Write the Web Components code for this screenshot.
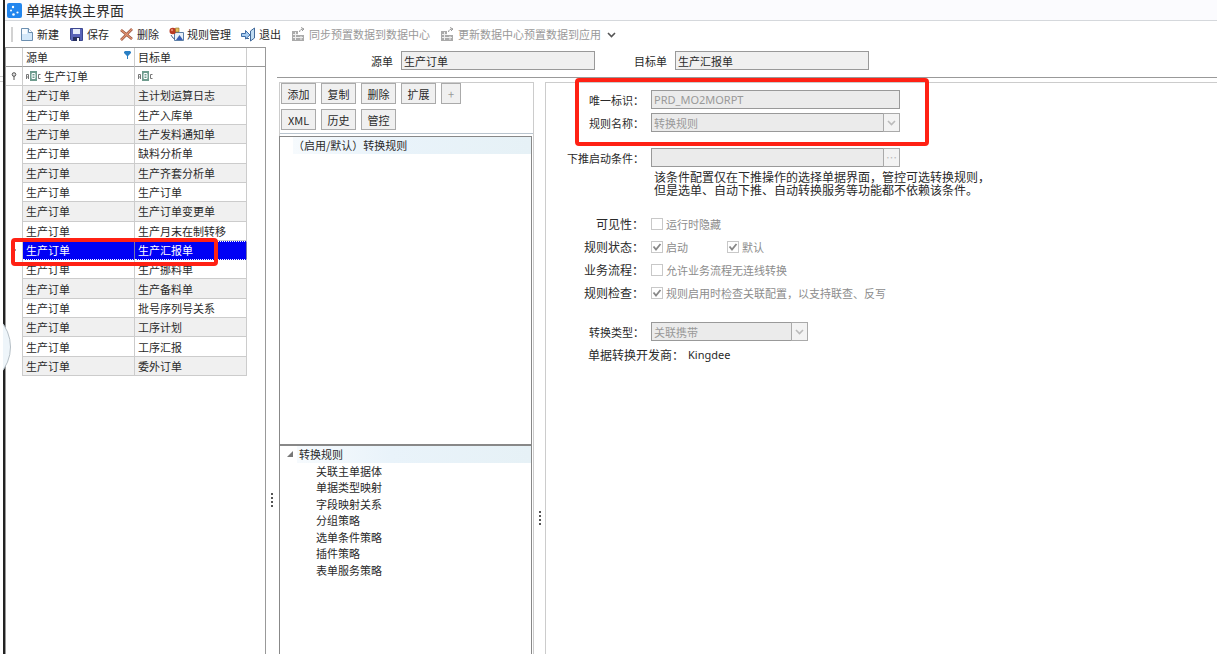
<!DOCTYPE html>
<html lang="zh-CN">
<head>
<meta charset="utf-8">
<title>单据转换主界面</title>
<style>
    html, body {
        height: 100%;
        margin: 0;
        overflow: hidden;
        background: #fff;
        color: #2a2a2a;
        font: 11px/16px "Noto Sans CJK SC", "Noto Sans", sans-serif;
    }
</style>
</head>
<body>
<app-window heading="单据转换主界面">
    <tool-bar slot="toolbar">
        <tool-item icon="new">新建</tool-item>
        <tool-item icon="save">保存</tool-item>
        <tool-item icon="remove">删除</tool-item>
        <tool-item icon="rules">规则管理</tool-item>
        <tool-item icon="exit">退出</tool-item>
        <tool-item icon="sync" disabled>同步预置数据到数据中心</tool-item>
        <tool-item icon="sync" disabled>更新数据中心预置数据到应用</tool-item>
    </tool-bar>
    <bill-grid slot="side"></bill-grid>
    <split-bar slot="side" offset="446"></split-bar>
    <bill-header slot="head"></bill-header>
    <rule-panel slot="body"></rule-panel>
    <split-bar slot="body" offset="429"></split-bar>
    <rule-form slot="body"></rule-form>
</app-window>

<script>
const ICONS = {
    logo: '<rect width="15" height="15" rx="2" fill="#2386ee"/><g fill="#fff"><circle cx="6" cy="4" r="1.200"/><circle cx="4" cy="7.500" r="1"/><circle cx="6.500" cy="11.500" r="1.300"/><circle cx="10.500" cy="9.500" r="1.100"/></g>',
    new: '<path d="M2.500 1.500h7l4 4v8h-11z" fill="#d3e8fa" stroke="#6c8fb0"/><path d="M3 2h5v5H3z" fill="#f7fbff"/><path d="M9.500 1.500v4h4" fill="#fff" stroke="#6c8fb0"/>',
    save: '<path d="M1.500 1.500h12v12h-11l-1-1z" fill="#5964b8" stroke="#3d4890"/><path d="M4 2h7v5H4z" fill="#e6ecfa"/><path d="M4 10h7v4H4z" fill="#27305f"/><path d="M8 11h2v3H8z" fill="#fff"/>',
    remove: '<path d="M2 3l11 9M13 2L2 13" fill="none" stroke="#93503c" stroke-width="2.600"/><path d="M2 3l11 9M13 2L2 13" fill="none" stroke="#e39472" stroke-width="1.200"/>',
    rules: '<path d="M5.500 5.500h9v8h-9z" fill="#e8f0f8" stroke="#5c7fa8"/><path d="M7 13l3.500-5 3.500 5z" fill="#3a5fb5"/><circle cx="3.800" cy="4" r="3.300" fill="#b93a22"/><circle cx="3" cy="3" r="1.200" fill="#e58a70"/><path d="M6.500 1h3.500v4H6.500z" fill="#eac15a" stroke="#8a6b28" stroke-width=".6"/><path d="M2 8l2 3 2 1" fill="none" stroke="#48628a"/>',
    exit: '<path d="M9.500 4l4-3v10l-4 3z" fill="#c0dcf2" stroke="#41699a"/><path d="M4 11.500h4" fill="none" stroke="#41699a"/><path d="M.5 6.500h4V3.500L9 8l-4.500 4V9.500h-4z" fill="#a9cdf0" stroke="#3f6ea8"/>',
    sync: '<path d="M1 4h6v10H1zM7 8h6v6H7z" fill="#aaa"/><path d="M2 7.500h5M2 10.500h10M4.500 5v8M10 9v4" stroke="#eee"/><path d="M8.500 5c0-2 2-3 4-3M10 .5l3 1.500-2 2" fill="none" stroke="#999"/>'
};

const icon = name => `<svg class="icon" width="15" height="15" viewBox="0 0 15 15" aria-hidden="true">${ICONS[name]}</svg>`;
const arrow = '<svg width="9" height="9" viewBox="0 0 9 9" aria-hidden="true"><path d="M1 3l3.500 3.500L8 3" fill="none" stroke="currentColor" stroke-width="1.600"/></svg>';

// Shared look of the read-only boxes
const FIELD_CSS = `
    input, select {
        appearance: none;
        box-sizing: border-box;
        height: 19px;
        margin: 0;
        padding: 0 2px;
        border: 1px solid #999;
        border-radius: 0;
        background: #f0f0f0;
        color: #2a2a2a;
        font: inherit;
        opacity: 1;
    }
    input:disabled, select:disabled {
        background: #ebebeb;
        color: #999;
    }
`;

class AppWindow extends HTMLElement {
    constructor() {
        super();
        this.attachShadow({ mode: 'open' });
    }

    connectedCallback() {
        this.shadowRoot.innerHTML = `
        <style>
            :host { display: flex; height: 100vh; position: relative; }
            .gutter { width: 3px; flex: none; }
            .gutter i { display: block; margin-top: 76px; height: 4px; border: solid #ccc; border-width: 1px 0; }
            .window { flex: 1; min-width: 0; display: flex; flex-direction: column; border-left: 2px solid #222; }
            header { display: flex; align-items: center; gap: 4px; height: 20px; padding-left: 2px; background: #fbfbfe; border-bottom: 1px solid #d5d8dc; }
            h1 { margin: 0; font-size: 14px; line-height: 20px; font-weight: 400; }
            .content { flex: 1; min-height: 0; display: flex; }
            .main { flex: 1; min-width: 0; display: flex; flex-direction: column; }
            .body { flex: 1; min-height: 0; display: flex; margin-top: 4px; padding-left: 2px; }
            .knob { position: absolute; left: 3px; top: 322px; }
        </style>
        <div class="gutter"><i></i></div>
        <div class="window">
            <header>${icon('logo')}<h1>${this.getAttribute('heading')}</h1></header>
            <slot name="toolbar"></slot>
            <div class="content">
                <slot name="side"></slot>
                <div class="main">
                    <slot name="head"></slot>
                    <div class="body"><slot name="body"></slot></div>
                </div>
            </div>
        </div>
        <svg class="knob" width="9" height="50" viewBox="0 0 9 50" aria-hidden="true">
            <circle cx="-32" cy="25" r="39.500" fill="#eef5fa" stroke="#b5bfc6"/>
        </svg>`;
    }
}

class ToolBar extends HTMLElement {
    constructor() {
        super();
        this.attachShadow({ mode: 'open' });
        this.shadowRoot.innerHTML = `
        <style>
            :host { display: flex; align-items: center; gap: 10px; height: 26px; padding-left: 6px; }
            .grip { width: 2px; height: 15px; margin-right: -4px; background: #d2d2d2; }
            button { margin: 0 0 0 -4px; padding: 0; border: 0; background: none; color: #555; line-height: 0; }
        </style>
        <span class="grip"></span>
        <slot></slot>
        <button type="button" aria-label="更多">${arrow}</button>`;
    }
}

class ToolItem extends HTMLElement {
    constructor() {
        super();
        this.attachShadow({ mode: 'open' });
    }

    connectedCallback() {
        this.shadowRoot.innerHTML = `
        <style>
            :host { display: block; }
            button { display: flex; align-items: center; gap: 3px; padding: 0; border: 0; background: none; color: #2a2a2a; font: inherit; white-space: nowrap; }
            button:disabled { color: #999; }
        </style>
        <button type="button" ${this.hasAttribute('disabled') ? 'disabled' : ''}>${icon(this.getAttribute('icon'))}<slot></slot></button>`;
    }
}

class SplitBar extends HTMLElement {
    constructor() {
        super();
        this.attachShadow({ mode: 'open' });
    }

    connectedCallback() {
        this.shadowRoot.innerHTML = `
        <style>
            :host { display: flex; flex: none; flex-direction: column; align-items: center; width: 11px; }
            svg { margin-top: ${this.getAttribute('offset')}px; }
        </style>
        <svg width="2" height="14" viewBox="0 0 2 14" aria-hidden="true"><path d="M1 0v14" stroke="#555" stroke-width="2" stroke-dasharray="2 2"/></svg>`;
    }
}

class BillGrid extends HTMLElement {
    constructor() {
        super();
        this.attachShadow({ mode: 'open' });

        const targets = ['主计划运算日志', '生产入库单', '生产发料通知单', '缺料分析单', '生产齐套分析单',
            '生产订单', '生产订单变更单', '生产月末在制转移', '生产汇报单', '生产挪料单', '生产备料单',
            '批号序列号关系', '工序计划', '工序汇报', '委外订单'];
        const abc = '<svg width="15" height="11" viewBox="0 0 15 11" aria-hidden="true"><path d="M4 0h7v10H4z" fill="#6f9c8e"/><path d="M6 2.500h3v5H6zM6 5h3" fill="none" stroke="#fff"/><path d="M.5 8V3.500h2V8M.5 6h2M14.500 3.500h-2v4h2" fill="none" stroke="#777"/></svg>';

        this.shadowRoot.innerHTML = `
        <style>
            :host { display: block; flex: none; box-sizing: border-box; position: relative; width: 261px; border: solid #999; border-width: 1px 1px 0; }
            table { width: 100%; height: 328px; table-layout: fixed; border-collapse: separate; border-spacing: 0; }
            th, td { box-sizing: border-box; height: 19px; padding: 0 0 0 3px; border: solid #ccc; border-width: 0 1px 1px 0; text-align: left; font-weight: 400; line-height: 16px; white-space: nowrap; }
            th { border-bottom-color: #999; }
            tr > :last-child { border-right: 0; }
            tbody tr > :last-child { border-bottom: 0; }
            tbody tr > :first-child { border-bottom: 0; padding: 0; }
            .head { display: flex; align-items: center; justify-content: space-between; padding-right: 3px; }
            .head svg { margin-bottom: 5px; }
            .filter { display: flex; align-items: center; gap: 3px; }
            .filter input { flex: 1; min-width: 0; height: 16px; padding: 0; border: 0; background: none; font: inherit; color: inherit; outline: 0; }
            tbody .filter-row td:first-child { border-bottom: 1px solid #ccc; }
            svg { display: block; flex: none; }
            .pin { margin: 0 auto; }
            .odd td:nth-child(2), .odd td:nth-child(3) { background: #f0f0f0; }
            .selected td:nth-child(2), .selected td:nth-child(3) { background: #0000f5; color: #fff; border-top: 1px dotted #fff; border-bottom: 1px dotted #fff; border-right-color: #77a; }
            .mark { position: absolute; left: 5px; top: 190px; box-sizing: border-box; width: 207px; height: 28px; border: 4px solid #ff2114; border-radius: 4px; }
        </style>
        <table>
            <colgroup><col style="width:17px"><col style="width:112px"><col style="width:112px"><col></colgroup>
            <thead><tr>
                <th></th>
                <th><div class="head">源单<svg width="7" height="8" viewBox="0 0 7 8" aria-hidden="true"><path d="M0 1l1-1h5l1 1v1L4 5v3H3V5L0 2z" fill="#2a7fc4"/></svg></div></th>
                <th>目标单</th>
                <th></th>
            </tr></thead>
            <tbody>
                <tr class="filter-row">
                    <td><svg class="pin" width="6" height="8" viewBox="0 0 6 8" aria-hidden="true"><circle cx="3" cy="2.500" r="1.800" fill="#ddd" stroke="#555"/><path d="M3 4v4" stroke="#555"/></svg></td>
                    <td><div class="filter">${abc}<input aria-label="筛选源单" value="生产订单"></div></td>
                    <td><div class="filter">${abc}<input aria-label="筛选目标单"></div></td>
                    <td></td>
                </tr>
                ${targets.map((name, i) => `<tr class="${i === 8 ? 'selected' : i % 2 ? '' : 'odd'}"><td>${i === 8 ? '<svg class="pin" width="3" height="6" viewBox="0 0 3 6" aria-hidden="true"><path d="M0 0l3 3-3 3z" fill="#333"/></svg>' : ''}</td><td>生产订单</td><td>${name}</td><td></td></tr>`).join('')}
            </tbody>
        </table>
        <div class="mark"></div>`;
    }
}

class BillHeader extends HTMLElement {
    constructor() {
        super();
        this.attachShadow({ mode: 'open' });
        this.shadowRoot.innerHTML = `
        <style>
            ${FIELD_CSS}
            :host { display: flex; align-items: center; gap: 39px; box-sizing: border-box; height: 31px; padding: 0 0 3px 94px; border-bottom: 1px solid #999; }
            div { display: flex; align-items: center; gap: 8px; white-space: nowrap; }
            input { width: 194px; }
        </style>
        <div><label for="source">源单</label><input id="source" value="生产订单" readonly></div>
        <div><label for="target">目标单</label><input id="target" value="生产汇报单" readonly></div>`;
    }
}

class RulePanel extends HTMLElement {
    constructor() {
        super();
        this.attachShadow({ mode: 'open' });

        const button = text => `<button type="button">${text}</button>`;
        const nodes = ['关联主单据体', '单据类型映射', '字段映射关系', '分组策略', '选单条件策略', '插件策略', '表单服务策略'];

        this.shadowRoot.innerHTML = `
        <style>
            :host { display: flex; flex: none; flex-direction: column; box-sizing: border-box; width: 255px; border: solid #ccc; border-width: 1px 1px 0; }
            .buttons { display: flex; flex-wrap: wrap; gap: 5px; padding: 0 0 3px 1px; border-bottom: 1px solid #b9c4ce; }
            button { box-sizing: border-box; width: 35px; height: 21px; padding: 0; border: 1px solid #aaa; border-radius: 0; background: #f0f0f0; color: #2a2a2a; font: inherit; line-height: 16px; }
            button:disabled { width: 20px; color: #999; }
            .row { display: flex; gap: 5px; width: 100%; }
            ul { margin: 0; padding: 0; list-style: none; }
            .box { box-sizing: border-box; margin: 0 1px 0 -1px; border: 1px solid #888; }
            .rules { height: 309px; margin-top: 2px; }
            .rules li, .root { background: linear-gradient(90deg, #f6fafd, #e9f3fa 40%, #e6f1f6); }
            .rules li { margin-left: 13px; line-height: 17px; }
            .tree { flex: 1; border-bottom: 0; }
            .nodes { height: 132px; display: grid; grid-template-columns: 17px 1fr; grid-auto-rows: 1fr; line-height: 16px; }
            .fold { grid-area: 1 / 1; display: flex; align-items: center; justify-content: center; padding-left: 3px; }
            .nodes li:not(.fold) { grid-column: 2; }
            .nodes .root { padding-left: 2px; }
            .nodes .leaf { padding-left: 19px; }
        </style>
        <div class="buttons">
            <div class="row">${['添加', '复制', '删除', '扩展'].map(button).join('')}<button type="button" disabled>+</button></div>
            <div class="row">${['XML', '历史', '管控'].map(button).join('')}</div>
        </div>
        <ul class="box rules"><li>（启用/默认）转换规则</li></ul>
        <div class="box tree">
            <ul class="nodes">
                <li class="fold"><svg width="6" height="6" viewBox="0 0 6 6" aria-hidden="true"><path d="M6 0v6H0z" fill="#777"/></svg></li>
                <li class="root">转换规则</li>
                ${nodes.map(text => `<li class="leaf">${text}</li>`).join('')}
            </ul>
        </div>`;
    }
}

class RuleForm extends HTMLElement {
    constructor() {
        super();
        this.attachShadow({ mode: 'open' });

        const check = (id, text, on) => `<span class="check"><input type="checkbox" id="${id}" ${on ? 'checked' : ''} disabled><svg width="12" height="12" viewBox="0 0 12 12" aria-hidden="true"><path d="M2.500 5.500L5 8.500l4.500-5.500" fill="none" stroke="#888" stroke-width="1.800"/></svg><label for="${id}">${text}</label></span>`;

        this.shadowRoot.innerHTML = `
        <style>
            ${FIELD_CSS}
            :host { display: block; flex: 1; min-width: 0; position: relative; padding-top: 5px; border: solid #ccc; border-width: 1px 0 0 1px; }
            .line { display: flex; align-items: center; gap: 7px; height: 23px; white-space: nowrap; }
            .name { flex: none; width: 98px; text-align: right; }
            .wide .name { font-size: 12px; }
            .combo { display: grid; grid-template-columns: 1fr 17px; width: 249px; }
            .combo > :first-child { grid-area: 1 / 1 / 2 / 3; width: 100%; }
            .combo > :last-child { grid-area: 1 / 2; box-sizing: border-box; width: 17px; height: 19px; padding: 0; display: flex; align-items: center; justify-content: center; border: 1px solid #aaa; border-radius: 0; background: #f3f3f3; color: #bbb; font: inherit; line-height: 11px; pointer-events: none; }
            .short { width: 157px; }
            #code { width: 249px; font-family: "Noto Sans", sans-serif; }
            .gap { margin-top: 12px; }
            .note { margin: 3px 0 14px 108px; font: 12px/13px "Liberation Sans", "Noto Sans CJK SC", sans-serif; }
            .check { display: grid; grid-template-columns: 12px auto; align-items: center; column-gap: 3px; margin-right: 32px; color: #8c8c8c; }
            .check input { grid-area: 1 / 1; width: 12px; height: 12px; padding: 0; border-color: #c8c8c8; background: #fff; }
            .check svg { grid-area: 1 / 1; visibility: hidden; }
            .check :checked + svg { visibility: visible; }
            .type { margin-top: 16px; }
            .vendor { padding-left: 42px; gap: 4px; }
            .vendor span { font-size: 12px; }
            .vendor output { font-family: "Noto Sans", sans-serif; }
            .mark { position: absolute; left: 29px; top: -5px; box-sizing: border-box; width: 354px; height: 68px; border: 4px solid #ff2114; border-radius: 4px; }
        </style>
        <div class="line"><label class="name" for="code">唯一标识：</label><input id="code" value="PRD_MO2MORPT" disabled></div>
        <div class="line"><label class="name" for="rule">规则名称：</label><span class="combo"><select id="rule" disabled><option>转换规则</option></select><span>${arrow}</span></span></div>
        <div class="line gap"><label class="name" for="cond">下推启动条件：</label><span class="combo"><input id="cond" disabled><button type="button" aria-label="选择条件" disabled>…</button></span></div>
        <p class="note">该条件配置仅在下推操作的选择单据界面，管控可选转换规则，<br>但是选单、自动下推、自动转换服务等功能都不依赖该条件。</p>
        <div class="line wide"><span class="name">可见性：</span>${check('hide', '运行时隐藏', false)}</div>
        <div class="line wide"><span class="name">规则状态：</span>${check('enabled', '启动', true)}${check('default', '默认', true)}</div>
        <div class="line wide"><span class="name">业务流程：</span>${check('flow', '允许业务流程无连线转换', false)}</div>
        <div class="line wide"><span class="name">规则检查：</span>${check('verify', '规则启用时检查关联配置，以支持联查、反写', true)}</div>
        <div class="line type"><label class="name" for="kind">转换类型：</label><span class="combo short"><select id="kind" disabled><option>关联携带</option></select><span>${arrow}</span></span></div>
        <div class="line vendor"><span>单据转换开发商：</span><output>Kingdee</output></div>
        <div class="mark"></div>`;
    }
}

customElements.define('app-window', AppWindow);
customElements.define('tool-bar', ToolBar);
customElements.define('tool-item', ToolItem);
customElements.define('split-bar', SplitBar);
customElements.define('bill-grid', BillGrid);
customElements.define('bill-header', BillHeader);
customElements.define('rule-panel', RulePanel);
customElements.define('rule-form', RuleForm);
</script>
</body>
</html>
